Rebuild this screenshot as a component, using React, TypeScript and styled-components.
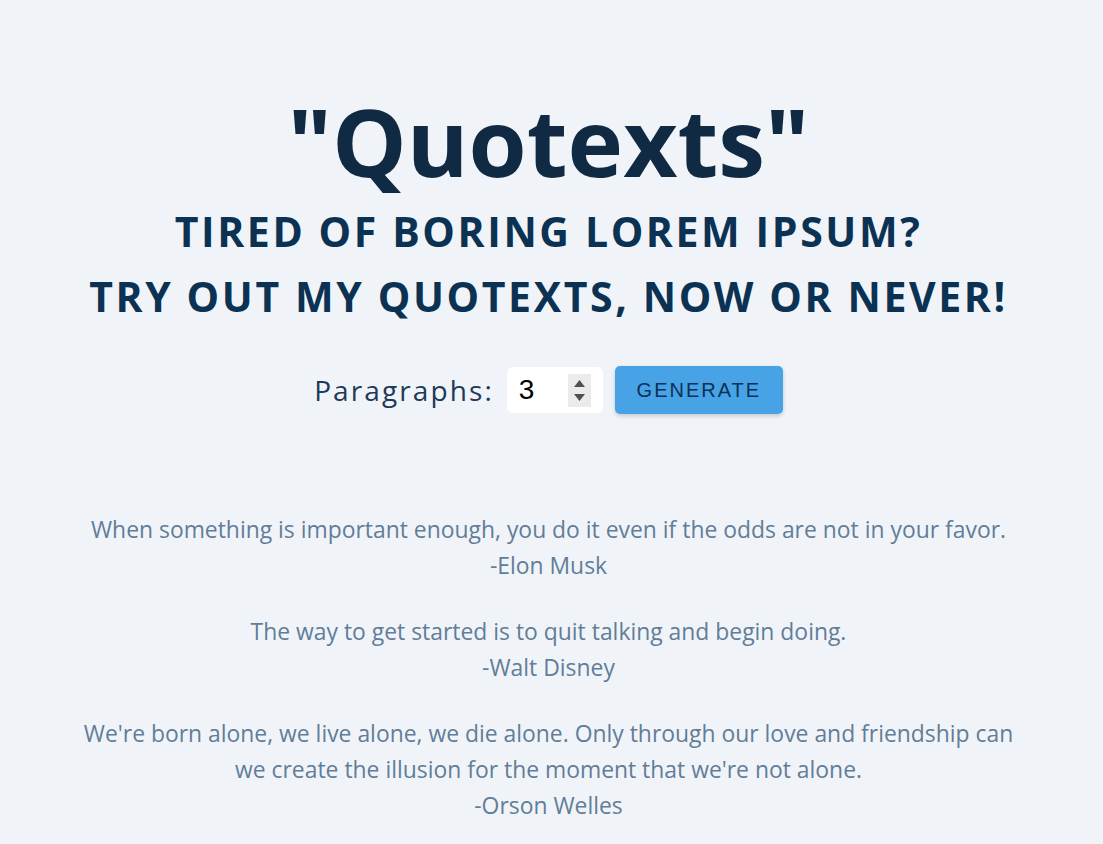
import React, { useState } from "react";
import styled, { createGlobalStyle } from "styled-components";

const GlobalStyle = createGlobalStyle`
  html, body {
    margin: 0;
    padding: 0;
    background: #f0f4f8;
  }
  body {
    font-family: "Open Sans", "Noto Sans", sans-serif;
  }
  * { box-sizing: border-box; }
`;

const Page = styled.main`
  display: flex;
  flex-direction: column;
  align-items: center;
  padding: 93px 6px 0 0;
  min-height: 844px;
`;

const Title = styled.h1`
  margin: 0;
  font-size: 94px;
  line-height: 96px;
  font-weight: 700;
  color: #102a43;
  text-align: center;
`;

const Subtitle = styled.h2`
  margin: 10px 0 0;
  font-size: 41px;
  line-height: 65px;
  font-weight: 700;
  letter-spacing: 2.6px;
  color: #0b3153;
  text-align: center;
  text-transform: uppercase;
`;

const Controls = styled.form`
  display: flex;
  align-items: center;
  margin-top: 37px;
  height: 48px;
`;

const Label = styled.label`
  font-size: 28px;
  letter-spacing: 2.1px;
  color: #1d3a58;
  margin-right: 13px;
`;

const InputBox = styled.div`
  display: flex;
  align-items: center;
  width: 96px;
  height: 46px;
  background: #ffffff;
  border-radius: 6px;
  padding-left: 12px;
  margin-right: 12px;
`;

const NumberInput = styled.input`
  width: 46px;
  border: none;
  outline: none;
  background: transparent;
  font-family: "Liberation Sans", Arial, sans-serif;
  font-size: 28px;
  color: #000;
  padding: 0;
  -moz-appearance: textfield;
  &::-webkit-inner-spin-button,
  &::-webkit-outer-spin-button {
    -webkit-appearance: none;
    margin: 0;
  }
`;

const Spinner = styled.div`
  display: flex;
  flex-direction: column;
  justify-content: center;
  align-items: center;
  width: 23px;
  height: 33px;
  background: #ebebeb;
  margin-left: 3px;
  gap: 4px;
`;

const SpinButton = styled.button`
  display: flex;
  align-items: center;
  justify-content: center;
  border: none;
  background: transparent;
  padding: 0;
  width: 23px;
  height: 10px;
  cursor: pointer;
`;

const GenerateButton = styled.button`
  width: 168px;
  height: 48px;
  background: #47a3e6;
  border: none;
  border-radius: 5px;
  box-shadow: 0 2px 4px rgba(0, 0, 0, 0.18);
  font-family: "Liberation Sans", Arial, sans-serif;
  font-size: 20px;
  letter-spacing: 2px;
  color: #0b3154;
  cursor: pointer;
`;

const Quotes = styled.section`
  width: 946px;
  margin-top: 98px;
  text-align: center;
`;

const Quote = styled.p`
  margin: 0 0 30px;
  font-size: 22.9px;
  line-height: 36px;
  color: #627d98;
`;

const quotes = [
  {
    text: "When something is important enough, you do it even if the odds are not in your favor.",
    author: "Elon Musk",
  },
  {
    text: "The way to get started is to quit talking and begin doing.",
    author: "Walt Disney",
  },
  {
    text: "We're born alone, we live alone, we die alone. Only through our love and friendship can we create the illusion for the moment that we're not alone.",
    author: "Orson Welles",
  },
];

export default function App() {
  const [count, setCount] = useState(3);
  return (
    <>
      <GlobalStyle />
      <Page>
        <Title>"Quotexts"</Title>
        <Subtitle>
          Tired of boring lorem ipsum?
          <br />
          Try out my quotexts, now or never!
        </Subtitle>
        <Controls onSubmit={(e) => e.preventDefault()}>
          <Label htmlFor="paragraphs">Paragraphs:</Label>
          <InputBox>
            <NumberInput
              id="paragraphs"
              type="number"
              min={1}
              value={count}
              onChange={(e) => setCount(Number(e.target.value))}
            />
            <Spinner>
              <SpinButton type="button" aria-label="increase" onClick={() => setCount((c) => c + 1)}>
                <svg width="11" height="7" viewBox="0 0 11 7">
                  <path d="M5.5 0 L11 7 L0 7 Z" fill="#505050" />
                </svg>
              </SpinButton>
              <SpinButton type="button" aria-label="decrease" onClick={() => setCount((c) => Math.max(1, c - 1))}>
                <svg width="11" height="7" viewBox="0 0 11 7">
                  <path d="M0 0 L11 0 L5.5 7 Z" fill="#505050" />
                </svg>
              </SpinButton>
            </Spinner>
          </InputBox>
          <GenerateButton type="submit">GENERATE</GenerateButton>
        </Controls>
        <Quotes>
          {quotes.slice(0, count).map((q) => (
            <Quote key={q.author}>
              {q.text}
              <br />-{q.author}
            </Quote>
          ))}
        </Quotes>
      </Page>
    </>
  );
}
